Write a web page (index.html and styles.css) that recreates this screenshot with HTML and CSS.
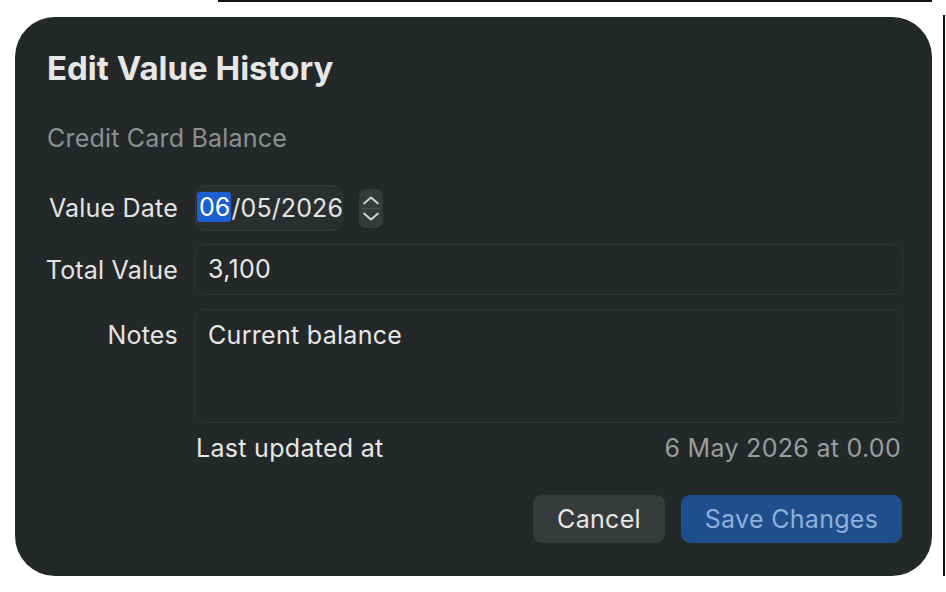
FILE: index.html
```html
<!DOCTYPE html>
<html>
<head>
<meta charset="utf-8">
<link rel="stylesheet" href="styles.css">
</head>
<body>
<div class="bg-line-top"></div>
<div class="bg-line-right"></div>
<div class="dialog">
  <h1 class="title">Edit Value History</h1>
  <div class="subtitle">Credit Card Balance</div>
  <div class="form">
    <div class="row row-date">
      <label class="label">Value Date</label>
      <div class="date-group">
        <div class="date-field"><span class="sel">06</span>/05/2026</div>
        <div class="stepper">
          <svg width="24" height="39" viewBox="0 0 24 39">
            <path d="M5 14.5 L12 8.5 L19 14.5" fill="none" stroke="#d4d6d7" stroke-width="1.8" stroke-linecap="round" stroke-linejoin="round"/>
            <line x1="3" y1="19.5" x2="21" y2="19.5" stroke="#4c5052" stroke-width="1.2"/>
            <path d="M5 24.5 L12 30.5 L19 24.5" fill="none" stroke="#d4d6d7" stroke-width="1.8" stroke-linecap="round" stroke-linejoin="round"/>
          </svg>
        </div>
      </div>
    </div>
    <div class="row row-total">
      <label class="label">Total Value</label>
      <div class="field">3,100</div>
    </div>
    <div class="row row-notes">
      <label class="label label-top">Notes</label>
      <div class="field notes">Current balance</div>
    </div>
    <div class="row row-updated">
      <div></div>
      <div class="updated">
        <span class="updated-label">Last updated at</span>
        <span class="updated-value">6 May 2026 at 0.00</span>
      </div>
    </div>
  </div>
  <div class="actions">
    <button class="btn btn-cancel">Cancel</button>
    <button class="btn btn-save">Save Changes</button>
  </div>
</div>
</body>
</html>
```
FILE: styles.css
```css
html, body {
  margin: 0;
  padding: 0;
  background: #ffffff;
  width: 946px;
  height: 592px;
  overflow: hidden;
}
body {
  position: relative;
  font-family: Inter, "Noto Sans", "Liberation Sans", sans-serif;
  padding-top: 17px;
  padding-left: 15px;
  box-sizing: border-box;
}
.bg-line-top {
  position: absolute;
  left: 218px;
  top: 0;
  width: 714px;
  height: 2px;
  background: #111;
}
.bg-line-right {
  position: absolute;
  left: 943px;
  top: 15px;
  width: 2px;
  height: 561px;
  background: #111;
}
.dialog {
  width: 917px;
  height: 559px;
  box-sizing: border-box;
  background: #242829;
  border-radius: 40px;
  padding: 33px 29px 0 32px;
  color: #e3e4e4;
}
.title {
  margin: 0;
  font-size: 33px;
  line-height: 36px;
  font-weight: 700;
  color: #e6e7e7;
  letter-spacing: 0;
}
.subtitle {
  margin-top: 38px;
  font-size: 25px;
  line-height: 28px;
  color: #8d9091;
  letter-spacing: 0.2px;
}
.form {
  margin-top: 33px;
  display: flex;
  flex-direction: column;
  font-size: 25px;
  letter-spacing: 0.3px;
}
.row {
  display: grid;
  grid-template-columns: 131px 1fr;
  column-gap: 16px;
  align-items: center;
}
.row-total { margin-top: 13px; }
.row-notes { margin-top: 14px; align-items: start; }
.row-updated { margin-top: 11px; }
.label {
  line-height: 28px;
  text-align: right;
  white-space: nowrap;
  justify-self: end;
  letter-spacing: 0.2px;
  color: #e3e4e4;
}
.label-top { padding-top: 12px; }
.date-group {
  display: flex;
  align-items: center;
  gap: 16px;
  padding-left: 1px;
}
.date-field {
  width: 148px;
  height: 46px;
  box-sizing: border-box;
  border: 1px solid #323637;
  background: #2a2e2f;
  border-radius: 11px;
  line-height: 44px;
  padding-left: 3px;
  color: #e3e4e4;
  white-space: nowrap;
  overflow: hidden;
  letter-spacing: 0.1px;
}
.sel {
  background: #1b5fd1;
  color: #ffffff;
  border-radius: 3px;
  display: inline-block;
  line-height: 30px;
  padding: 0 1px 0 2px;
  margin-left: -2px;
  vertical-align: 1px;
}
.stepper {
  width: 24px;
  height: 39px;
  background: #363a3b;
  border-radius: 7px;
  display: flex;
}
.field {
  height: 51px;
  box-sizing: border-box;
  border: 1.5px solid #303435;
  border-radius: 11px;
  line-height: 48px;
  padding-left: 13px;
  color: #e6e7e7;
}
.notes {
  height: 114px;
  line-height: 28px;
  padding-top: 11px;
}
.updated {
  display: flex;
  justify-content: space-between;
  line-height: 28px;
  padding-left: 2px;
  padding-right: 2px;
}
.updated-label { color: #e6e7e7; }
.updated-value { color: #9a9d9e; }
.actions {
  margin-top: 33px;
  display: flex;
  justify-content: flex-end;
  gap: 16px;
  padding-right: 1px;
}
.btn {
  height: 48px;
  border: none;
  border-radius: 9px;
  font-family: Inter, "Noto Sans", "Liberation Sans", sans-serif;
  font-size: 25px;
  letter-spacing: 0.3px;
  padding: 0;
}
.btn-cancel {
  width: 132px;
  background: #373b3c;
  color: #e6e7e7;
}
.btn-save {
  width: 221px;
  background: #1f4e8c;
  color: #8fb0db;
}
```
